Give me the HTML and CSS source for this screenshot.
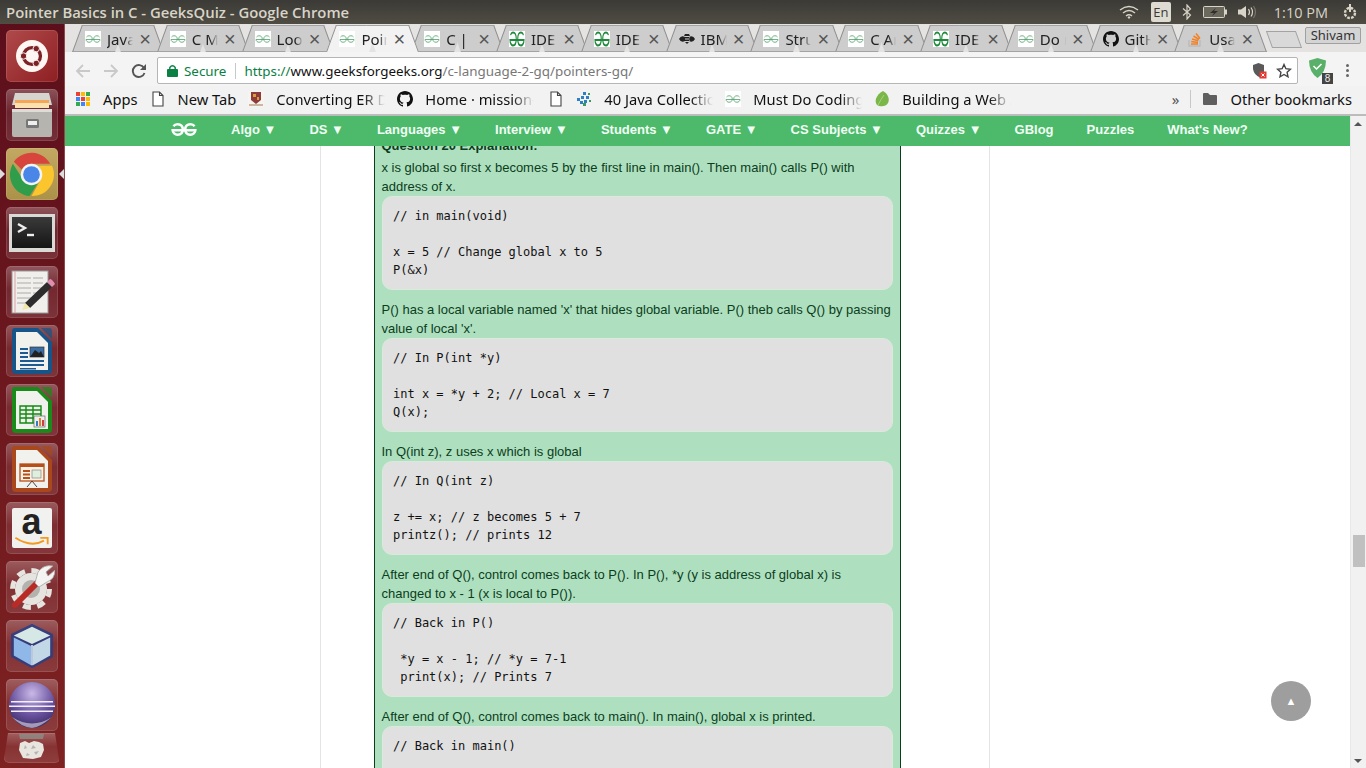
FILE: index.html
```html
<!DOCTYPE html>
<html lang="en">

<head>
  <meta charset="UTF-8">
  <title>Pointer Basics in C - GeeksQuiz - Google Chrome</title>
  <link rel="stylesheet" href="styles.css">
</head>

<body>
  <svg class="defs" width="0" height="0">
    <symbol id="gg" viewBox="0 0 32 16">
      <path fill="none" stroke="currentColor" d="M16 9H30C30 12 27 14.500 24 14.500 20 14.500 17.500 12 17.500 8 17.500 4 20 1.500 24 1.500 26 1.500 28 2.500 29 4M16 9H2C2 12 5 14.500 8 14.500 12 14.500 14.500 12 14.500 8 14.500 4 12 1.500 8 1.500 6 1.500 4 2.500 3 4" />
    </symbol>
    <symbol id="gg-tall" viewBox="0 0 32 16" preserveAspectRatio="none">
      <path fill="none" stroke="currentColor" d="M16 9H30C30 12 27 14.500 24 14.500 20 14.500 17.500 12 17.500 8 17.500 4 20 1.500 24 1.500 26 1.500 28 2.500 29 4M16 9H2C2 12 5 14.500 8 14.500 12 14.500 14.500 12 14.500 8 14.500 4 12 1.500 8 1.500 6 1.500 4 2.500 3 4" />
    </symbol>
    <symbol id="doc" viewBox="0 0 16 16">
      <path fill="#fff" stroke="#444" stroke-width="1.100" d="M3 1H9.500L13 4.500V15H3ZM9.500 1V4.500H13" />
    </symbol>
    <symbol id="octo" viewBox="0 0 16 16">
      <path fill="#111" d="M8 0C3.600 0 0 3.600 0 8c0 3.500 2.300 6.500 5.500 7.600.4.100.5-.2.500-.4v-1.400c-2.200.5-2.700-1-2.700-1-.4-.9-.9-1.200-.9-1.200-.7-.5.100-.5.100-.5.800.1 1.200.8 1.200.8.700 1.200 1.900.9 2.300.7.100-.5.300-.9.500-1.100-1.800-.2-3.600-.9-3.600-4 0-.9.300-1.600.8-2.100-.1-.2-.4-1 .1-2.100 0 0 .7-.2 2.200.8.600-.2 1.300-.3 2-.3s1.400.1 2 .3c1.500-1 2.200-.8 2.200-.8.400 1.100.2 1.900.1 2.100.5.600.8 1.300.8 2.100 0 3.100-1.900 3.700-3.700 3.900.3.300.6.800.6 1.500v2.200c0 .2.100.5.600.4C13.700 14.500 16 11.500 16 8c0-4.400-3.600-8-8-8z" />
    </symbol>
    <symbol id="lo-page" viewBox="0 0 40 46">
      <path fill="currentColor" d="M3 0H26L40 14V42Q40 46 36 46H4Q0 46 0 42V3Q0 0 3 0Z" />
      <path fill="#f1f1ee" d="M4 4H25L36 15V42H4Z" />
      <path fill="currentColor" opacity=".7" d="M29 0H37Q40 0 40 3V11Z" />
    </symbol>
  </svg>

  <div class="titlebar">
    <span class="window-title">Pointer Basics in C - GeeksQuiz - Google Chrome</span>
    <div class="tray">
      <svg class="tray-wifi" width="20" height="14" viewBox="0 0 20 14">
        <path fill="none" stroke="#d8d4c8" stroke-width="1.400" d="M1 5Q10-2 19 5M4 8Q10 3 16 8M7 11Q10 8.500 13 11" />
        <path fill="#d8d4c8" d="M8.500 12.500L10 11l1.500 1.500L10 14Z" />
      </svg>
      <span class="tray-lang">En</span>
      <svg width="10" height="16" viewBox="0 0 10 16">
        <path fill="none" stroke="#d8d4c8" stroke-width="1.200" d="M1 4.500L8.500 11 5 15V1L8.500 5 1 11.500" />
      </svg>
      <svg width="24" height="12" viewBox="0 0 24 12">
        <rect x=".5" y=".5" width="21" height="11" rx="1" fill="#6b685e" stroke="#d8d4c8" />
        <rect x="22" y="3.500" width="2" height="5" fill="#d8d4c8" />
        <path fill="#2f2e2a" d="M13 2L7 7h4l-2 3 6-5h-4z" />
      </svg>
      <svg width="20" height="14" viewBox="0 0 20 14">
        <path fill="#d8d4c8" d="M0 4.500H3L8 1V13L3 9.500H0Z" />
        <path fill="none" stroke="#d8d4c8" stroke-width="1.200" d="M10.500 4Q12.500 7 10.500 10M13 2.500Q16 7 13 11.500" />
        <path fill="none" stroke="#77746a" stroke-width="1.200" d="M15.500 1Q19.500 7 15.500 13" />
      </svg>
      <span class="tray-time">1:10 PM</span>
      <svg width="16" height="16" viewBox="0 0 16 16">
        <circle cx="8" cy="9" r="5" fill="none" stroke="#d8d4c8" stroke-width="2.400" stroke-dasharray="2.700 1.200" />
        <path stroke="#d8d4c8" stroke-width="2" d="M8 0V8" />
      </svg>
    </div>
  </div>

  <div class="desktop">
    <aside class="launcher">
      <div class="tile tile-ubuntu">
        <svg width="32" height="32" viewBox="3 3 34 34">
          <circle cx="20" cy="20" r="17" fill="#fdf6f2" />
          <circle cx="20" cy="20" r="9" fill="none" stroke="#7c2126" stroke-width="3.500" />
          <circle cx="11" cy="20" r="3.400" fill="#7c2126" stroke="#fdf6f2" />
          <circle cx="24.500" cy="12.200" r="3.400" fill="#7c2126" stroke="#fdf6f2" />
          <circle cx="24.500" cy="27.800" r="3.400" fill="#7c2126" stroke="#fdf6f2" />
        </svg>
      </div>
      <div class="tile">
        <svg width="46" height="46" viewBox="0 0 46 46">
          <path fill="#d6d4cf" d="M6 1H40L43 13H3Z" />
          <rect x="6" y="8" width="34" height="8" fill="#f2a65a" />
          <rect x="6" y="11" width="34" height="5" fill="#fbe0b0" />
          <rect x="3" y="17" width="40" height="28" rx="2" fill="#b6b4ae" />
          <rect x="3" y="17" width="40" height="3" fill="#dedcd6" />
          <rect x="17" y="27" width="13" height="9" rx="1.500" fill="#777" />
          <rect x="19" y="29" width="9" height="4" fill="#eee" />
        </svg>
      </div>
      <div class="tile tile-active">
        <svg width="47" height="47" viewBox="0 0 48 48">
          <path fill="#d8453c" d="M6 11A22 22 0 0 1 43 13L24 13Q17 13 14 19Z" />
          <path fill="#fbc52d" d="M45 15A22 22 0 0 1 24 46L33 30Q36 22 31 15Z" />
          <path fill="#2f9d4a" d="M5 13A22 22 0 0 0 22 46L31 32Q23 36 16 30Z" />
          <circle cx="24" cy="24" r="11" fill="#f4f4f4" />
          <circle cx="24" cy="24" r="8.500" fill="#4a86e8" />
        </svg>
      </div>
      <div class="tile">
        <svg width="46" height="38" viewBox="0 0 46 38">
          <defs>
            <linearGradient id="term" x1="0" y1="0" x2="0" y2="1">
              <stop offset="0" stop-color="#3a3a3a" />
              <stop offset="1" stop-color="#151515" />
            </linearGradient>
          </defs>
          <rect width="46" height="38" fill="#d9d9d6" />
          <rect x="3" y="3" width="40" height="31" fill="url(#term)" />
          <path fill="none" stroke="#eee" stroke-width="2.400" d="M9 10L16 14 9 18" />
          <path stroke="#eee" stroke-width="2.400" d="M18 21H25" />
        </svg>
      </div>
      <div class="tile">
        <svg width="46" height="44" viewBox="0 0 46 44">
          <rect x="3" y="1" width="36" height="42" fill="#f0efec" stroke="#999" />
          <path stroke="#aaa" stroke-dasharray="14 2" d="M8 8H34M8 13H34M8 18H34M8 23H28M8 28H22M8 33H18" />
          <path stroke="#d8a0a0" d="M6 1V43" />
          <path fill="#2d2d2d" d="M16 33L38 12 43 17 21 38Z" />
          <path fill="#f3e7a6" d="M16 33L21 38 13 40Z" />
          <path fill="#e08fb0" d="M38 12L41 9Q43 9 46 14L43 17Z" />
        </svg>
      </div>
      <div class="tile">
        <svg class="lo-writer" width="40" height="46" viewBox="0 0 40 46">
          <use href="#lo-page" />
          <path fill="#1b5a92" d="M8 20H16V22H8ZM8 24H16V26H8ZM8 28H16V30H8ZM8 32H32V34H8ZM8 36H32V38H8ZM8 40H24V41.500H8Z" />
          <rect x="18" y="19" width="14" height="10" fill="#3a6ea5" stroke="#333" stroke-width=".7" />
          <path fill="#222" d="M18 29L23 22 27 25 29 23 32 29Z" />
        </svg>
      </div>
      <div class="tile">
        <svg class="lo-calc" width="40" height="46" viewBox="0 0 40 46">
          <use href="#lo-page" />
          <path fill="none" stroke="#128a12" stroke-width="1.400" d="M8 19H29V36H8ZM8 23H29M8 27H29M8 31H29M14 19V36M21 19V36" />
          <rect x="22" y="29" width="11" height="11" fill="#eee" stroke="#666" stroke-width=".7" />
          <path fill="#2d7fc4" d="M24 34H26V39H24Z" />
          <path fill="#e08030" d="M27 31H29V39H27Z" />
          <path fill="#d04040" d="M30 33H32V39H30Z" />
        </svg>
      </div>
      <div class="tile">
        <svg class="lo-impress" width="40" height="46" viewBox="0 0 40 46">
          <use href="#lo-page" />
          <rect x="8" y="18" width="24" height="17" fill="#fdf0e4" stroke="#b6501a" stroke-width="1.300" />
          <path fill="#b6501a" d="M8 18H32V21H8ZM11 24H18V26H11ZM11 27.500H18V29.500H11ZM11 31H18V33H11Z" />
          <rect x="20" y="24" width="9" height="8" fill="#dfeedd" stroke="#777" stroke-width=".6" />
          <path fill="none" stroke="#444" d="M20 35L15 41M20 35L25 41" />
        </svg>
      </div>
      <div class="tile">
        <div class="amazon">
          <span class="amazon-a">a</span>
          <svg class="amazon-smile" width="38" height="12" viewBox="0 0 38 13">
            <path fill="none" stroke="#f49a1f" stroke-width="2" d="M1 2Q18 13 32 5" />
            <path fill="none" stroke="#f49a1f" stroke-width="2" d="M28 2H36V9" />
          </svg>
        </div>
      </div>
      <div class="tile">
        <svg width="46" height="46" viewBox="0 0 46 46">
          <circle cx="22" cy="25" r="16" fill="#e6e4e0" />
          <circle cx="22" cy="25" r="18.500" fill="none" stroke="#e6e4e0" stroke-width="5" stroke-dasharray="8 6.500" />
          <circle cx="22" cy="25" r="9" fill="#b4b2ad" />
          <path stroke="#b92b27" stroke-width="6" stroke-linecap="round" d="M6 41L30 17" />
          <path fill="#f4f4f2" stroke="#a5a5a5" stroke-width=".8" d="M26 19L29 8Q35 0 44 2L37 8 39 12 46 6Q46 15 38 18L30 23Z" />
        </svg>
      </div>
      <div class="tile">
        <svg width="44" height="46" viewBox="0 0 46 48">
          <path fill="#2a3f86" opacity=".85" stroke="#2a3f86" stroke-width="2" stroke-linejoin="round" d="M23 2L44 12V35L23 46 2 35V12Z" />
          <path fill="#d6e8e6" d="M23 4L42 13 23 22 4 13Z" />
          <path fill="#8fb8e8" d="M4 15L22 24V44L4 34Z" />
          <path fill="#c3d8e6" d="M42 15L24 24V44L42 34Z" />
          <path stroke="#f4fbff" stroke-width="1.500" d="M23 23V44" />
        </svg>
      </div>
      <div class="tile">
        <svg width="46" height="46" viewBox="0 0 46 46">
          <defs>
            <radialGradient id="ecl" cx=".5" cy=".25" r=".85">
              <stop offset="0" stop-color="#c9b9e6" />
              <stop offset=".55" stop-color="#6a52a0" />
              <stop offset="1" stop-color="#2c2050" />
            </radialGradient>
          </defs>
          <circle cx="23" cy="23" r="23" fill="url(#ecl)" />
          <path fill="#f2eefa" d="M2 19H44V20.500H2ZM0 23.500H46V25H0ZM2 28.500H44V30H2Z" />
          <path fill="#fff" opacity=".5" d="M3 35Q23 48 43 35 30 46 23 46 12 45 3 35Z" />
        </svg>
      </div>
      <div class="tile tile-trash">
        <svg width="27" height="28" viewBox="0 0 27 28">
          <path fill="#8f8d88" opacity=".8" d="M1 1H26L25 6H2Z" />
          <path fill="#e9e6df" d="M2 10L7 8 11 10 16 8 21 9 25 11 26 17 23 24 15 26 5 25 1 17Z" />
          <path fill="#b5b5b0" d="M7 12L9 15 6 16ZM15 12L18 15 13 16ZM21 18L18 22 16 19ZM9 20L12 22 8 23Z" />
        </svg>
      </div>
    </aside>

    <div class="browser">
      <div class="tabstrip">
        <div class="tab">
          <svg class="favicon fav-gg"><use href="#gg" /></svg>
          <span class="tab-name">Java</span><span class="tab-x">×</span>
        </div>
        <div class="tab">
          <svg class="favicon fav-gg"><use href="#gg" /></svg>
          <span class="tab-name">C Ma</span><span class="tab-x">×</span>
        </div>
        <div class="tab">
          <svg class="favicon fav-gg"><use href="#gg" /></svg>
          <span class="tab-name">Loop</span><span class="tab-x">×</span>
        </div>
        <div class="tab tab-active">
          <svg class="favicon fav-gg"><use href="#gg" /></svg>
          <span class="tab-name">Point</span><span class="tab-x">×</span>
        </div>
        <div class="tab">
          <svg class="favicon fav-gg"><use href="#gg" /></svg>
          <span class="tab-name">C | S</span><span class="tab-x">×</span>
        </div>
        <div class="tab">
          <svg class="favicon fav-ide"><use href="#gg-tall" /></svg>
          <span class="tab-name">IDE</span><span class="tab-x">×</span>
        </div>
        <div class="tab">
          <svg class="favicon fav-ide"><use href="#gg-tall" /></svg>
          <span class="tab-name">IDE</span><span class="tab-x">×</span>
        </div>
        <div class="tab">
          <svg class="favicon" viewBox="0 0 16 16">
            <path fill="#222" d="M0 8Q2 4 6 6V10Q2 12 0 8ZM16 8Q14 4 10 6V10Q14 12 16 8ZM6 3H10L11 5H5ZM5.500 6H10.500V7.500H5.500ZM5.500 8.500H10.500V10H5.500ZM6 11H10L8 13Z" />
          </svg>
          <span class="tab-name">IBM</span><span class="tab-x">×</span>
        </div>
        <div class="tab">
          <svg class="favicon fav-gg"><use href="#gg" /></svg>
          <span class="tab-name">Struc</span><span class="tab-x">×</span>
        </div>
        <div class="tab">
          <svg class="favicon fav-gg"><use href="#gg" /></svg>
          <span class="tab-name">C Ar</span><span class="tab-x">×</span>
        </div>
        <div class="tab">
          <svg class="favicon fav-ide"><use href="#gg-tall" /></svg>
          <span class="tab-name">IDE</span><span class="tab-x">×</span>
        </div>
        <div class="tab">
          <svg class="favicon fav-gg"><use href="#gg" /></svg>
          <span class="tab-name">Do r</span><span class="tab-x">×</span>
        </div>
        <div class="tab">
          <svg class="favicon"><use href="#octo" /></svg>
          <span class="tab-name">GitH</span><span class="tab-x">×</span>
        </div>
        <div class="tab">
          <svg class="favicon" viewBox="0 0 16 16">
            <path fill="none" stroke="#bcbbbb" stroke-width="1.400" d="M2 9V15H13V9" />
            <path fill="none" stroke="#f48024" stroke-width="1.500" d="M4 13H11M4.200 10.500L11 11.500M5 8L11.200 9.800M6.500 5L12 8.500M9 2.500L13 7.500" />
          </svg>
          <span class="tab-name">Usa</span><span class="tab-x">×</span>
        </div>
        <div class="newtab"></div>
        <span class="profile">Shivam</span>
      </div>

      <div class="toolbar">
        <svg class="nav-icon" width="16" height="16" viewBox="0 0 16 16">
          <path fill="none" stroke="#c9c9c9" stroke-width="1.800" d="M15 8H2M8 2L2 8 8 14" />
        </svg>
        <svg class="nav-icon" width="16" height="16" viewBox="0 0 16 16">
          <path fill="none" stroke="#c9c9c9" stroke-width="1.800" d="M1 8H14M8 2L14 8 8 14" />
        </svg>
        <svg class="nav-icon" width="16" height="16" viewBox="0 0 16 16">
          <path fill="none" stroke="#555" stroke-width="1.900" d="M13.500 10A6 6 0 1 1 13 5" />
          <path fill="#555" d="M15 1V7H9Z" />
        </svg>
        <div class="omnibox">
          <svg class="lock" width="11" height="13" viewBox="0 0 11 13">
            <path fill="none" stroke="#0b8043" stroke-width="1.400" d="M2.800 6V3.500Q5.500 0 8.200 3.500V6" />
            <rect y="5" width="11" height="8" rx="1" fill="#0b8043" />
          </svg>
          <span class="secure">Secure</span>
          <span class="url"><span class="url-scheme">https://</span>www.geeksforgeeks.org<span class="url-path">/c-language-2-gq/pointers-gq/</span></span>
          <svg class="omni-shield" width="14" height="16" viewBox="0 0 14 16">
            <path fill="#5a5a5a" d="M5.500 0L11 2V9H7V14.500Q1 12 0 6V2Z" />
            <rect x="6.500" y="8.500" width="7" height="7" fill="#e53935" />
            <path stroke="#fff" d="M8.500 10.500L11.500 13.500M11.500 10.500L8.500 13.500" />
          </svg>
          <svg width="16" height="15" viewBox="0 0 16 15">
            <path fill="none" stroke="#444" stroke-width="1.400" d="M8 1.500L9.900 5.700 14.500 6.200 11.100 9.300 12 13.800 8 11.500 4 13.800 4.900 9.300 1.500 6.200 6.100 5.700Z" />
          </svg>
        </div>
        <div class="adguard">
          <svg width="17" height="20" viewBox="0 0 17 20">
            <path fill="#5ab06a" d="M8.500 0L17 2.500Q17 14 8.500 20 0 14 0 2.500Z" />
            <path fill="none" stroke="#fff" stroke-width="1.500" d="M4.500 8L7.500 11 12.500 6" />
          </svg>
          <span class="badge">8</span>
        </div>
        <div class="menu-dots"><i></i><i></i><i></i></div>
      </div>

      <div class="bookmarks">
        <div class="bm">
          <svg class="bm-icon" viewBox="0 0 16 16">
            <path fill="#ea4335" d="M1 1H5V5H1Z" />
            <path fill="#fbbc05" d="M6 1H10V5H6Z" />
            <path fill="#34a853" d="M11 1H15V5H11Z" />
            <path fill="#4285f4" d="M1 6H5V10H1Z" />
            <path fill="#ea4335" d="M6 6H10V10H6Z" />
            <path fill="#fbbc05" d="M11 6H15V10H11Z" />
            <path fill="#34a853" d="M1 11H5V15H1Z" />
            <path fill="#4285f4" d="M6 11H10V15H6Z" />
            <path fill="#fbbc05" d="M11 11H15V15H11Z" />
          </svg>
          <span>Apps</span>
        </div>
        <div class="bm">
          <svg class="bm-icon"><use href="#doc" /></svg>
          <span>New Tab</span>
        </div>
        <div class="bm">
          <svg class="bm-icon" viewBox="0 0 16 16">
            <rect width="16" height="16" fill="#f7f3ee" />
            <path fill="#8e3b3b" d="M3 1H13V9L8 13 3 9Z" />
            <path fill="#d8a03c" d="M5 3H8V6H5ZM9 6H11V9H9Z" />
            <path fill="#c9b8a0" d="M1 13H15V15H1Z" />
          </svg>
          <span class="bm-fade">Converting ER Diagrams</span>
        </div>
        <div class="bm">
          <svg class="bm-icon"><use href="#octo" /></svg>
          <span class="bm-fade">Home · mission-peace</span>
        </div>
        <div class="bm bm-doc">
          <svg class="bm-icon"><use href="#doc" /></svg>
        </div>
        <div class="bm">
          <svg class="bm-icon" viewBox="0 0 16 16">
            <path fill="#2f7fc4" d="M7 1H10V4H7ZM10 5H13V8H10ZM5 5H8V8H5ZM1 7H4V10H1ZM8 9H11V12H8ZM4 10H7V13H4Z" />
            <path fill="#3a9a5a" d="M12 2H14V4H12ZM7 12H10V15H7ZM13 9H15V11H13Z" />
          </svg>
          <span class="bm-fade">40 Java Collection Interview</span>
        </div>
        <div class="bm">
          <svg class="bm-icon fav-gg"><use href="#gg" /></svg>
          <span class="bm-fade">Must Do Coding Questions</span>
        </div>
        <div class="bm">
          <svg class="bm-icon" viewBox="0 0 16 16">
            <path fill="#7ab648" d="M9 0C14 3 16 8 14 12 12 16 6 16 3 14 0 10 2 4 9 0Z" />
            <path fill="none" stroke="#a6d47c" d="M4 14Q7 8 10 4" />
          </svg>
          <span class="bm-fade">Building a Web Application</span>
        </div>
        <div class="bm-right">
          <span class="bm-more">»</span>
          <span class="bm-sep"></span>
          <div class="bm">
            <svg class="bm-icon" viewBox="0 0 16 16">
              <path fill="#5f5f5f" d="M1 3Q1 2 2 2H6L8 4H14Q15 4 15 5V13Q15 14 14 14H2Q1 14 1 13Z" />
            </svg>
            <span>Other bookmarks</span>
          </div>
        </div>
      </div>

      <div class="viewport">
        <div class="page">
          <nav class="site-nav">
            <svg class="site-logo"><use href="#gg" /></svg>
            <a>Algo ▼</a>
            <a>DS ▼</a>
            <a>Languages ▼</a>
            <a>Interview ▼</a>
            <a>Students ▼</a>
            <a>GATE ▼</a>
            <a>CS Subjects ▼</a>
            <a>Quizzes ▼</a>
            <a>GBlog</a>
            <a>Puzzles</a>
            <a>What's New?</a>
          </nav>
          <div class="content-col">
            <div class="answer">
              <p class="answer-head">Question 20 Explanation:</p>
              <p>x is global so first x becomes 5 by the first line in main(). Then main() calls P() with address of x.</p>
              <pre>// in main(void)

x = 5 // Change global x to 5
P(&amp;x)</pre>
              <p>P() has a local variable named 'x' that hides global variable. P() theb calls Q() by passing value of local 'x'.</p>
              <pre>// In P(int *y)

int x = *y + 2; // Local x = 7
Q(x);</pre>
              <p>In Q(int z), z uses x which is global</p>
              <pre>// In Q(int z)

z += x; // z becomes 5 + 7
printz(); // prints 12</pre>
              <p>After end of Q(), control comes back to P(). In P(), *y (y is address of global x) is changed to x - 1 (x is local to P()).</p>
              <pre>// Back in P()

 *y = x - 1; // *y = 7-1
 print(x); // Prints 7</pre>
              <p>After end of Q(), control comes back to main(). In main(), global x is printed.</p>
              <pre>// Back in main()

print(x); // Prints 6</pre>
            </div>
          </div>
          <div class="to-top">▲</div>
        </div>
        <div class="scrollbar">
          <span class="arrow-up"></span>
          <span class="thumb"></span>
          <span class="arrow-down"></span>
        </div>
      </div>
    </div>
  </div>
</body>

</html>
```

FILE: styles.css
```css
* {
  box-sizing: border-box;
}

html,
body {
  height: 100%;
}

body {
  margin: 0;
  height: 768px;
  overflow: hidden;
  display: flex;
  flex-direction: column;
  font-family: "Liberation Sans", Arial, sans-serif;
}

.defs {
  position: absolute;
}

/* ubuntu top panel */
.titlebar {
  height: 24px;
  flex: none;
  display: flex;
  align-items: center;
  padding: 0 8px 0 6px;
  background: linear-gradient(#3b3a36, #4f4c43);
  color: #d8d4c8;
}

.window-title {
  font: 600 14.85px "Open Sans", sans-serif;
}

.tray {
  margin-left: auto;
  display: flex;
  align-items: center;
  gap: 11px;
}

.tray-lang {
  width: 20px;
  height: 20px;
  border-radius: 2px;
  background: #dedbd2;
  color: #3b3a36;
  font: 13px/20px "Open Sans", sans-serif;
  text-align: center;
}

.tray-wifi {
  margin-right: 1px;
}

.tray-time {
  font: 14.5px "Open Sans", sans-serif;
  margin: 0 3px 0 5px;
}

.desktop {
  flex: 1;
  display: flex;
  min-height: 0;
}

/* launcher */
.launcher {
  width: 65px;
  flex: none;
  overflow: hidden;
  display: flex;
  flex-direction: column;
  align-items: center;
  gap: 7px;
  padding: 6px 1px 0 0;
  background: linear-gradient(#5c0f1b, #7e2222);
  border-right: 1px solid #8e4a4a;
}

.tile {
  width: 52px;
  height: 52px;
  flex: none;
  position: relative;
  display: flex;
  align-items: center;
  justify-content: center;
  border-radius: 5px;
  background: linear-gradient(rgba(255, 255, 255, .28), rgba(255, 255, 255, .08) 45%, rgba(255, 255, 255, .12));
  box-shadow: inset 0 0 0 1px rgba(255, 255, 255, .12);
}

.tile-ubuntu {
  background: linear-gradient(135deg, #b04a4a, #8e1f22);
}

.tile-active {
  background: linear-gradient(#c2a862, #ac9149);
}

.tile-active::before,
.tile-active::after {
  content: "";
  position: absolute;
  top: 21px;
  border: 5px solid transparent;
}

.tile-active::before {
  left: -6px;
  border-left-color: #ddd;
}

.tile-active::after {
  right: -6px;
  border-right-color: #ddd;
}

.tile-trash {
  width: 56px;
  height: 30px;
  margin-top: -5px;
  align-items: flex-start;
  clip-path: polygon(8% 0, 92% 0, 100% 100%, 0 100%);
}

.lo-writer {
  color: #175488;
}

.lo-calc {
  color: #1a8a1a;
}

.lo-impress {
  color: #a8481c;
}

.amazon {
  width: 40px;
  height: 40px;
  border-radius: 2px;
  background: #f1f1ef;
  display: flex;
  flex-direction: column;
  align-items: center;
  overflow: hidden;
}

.amazon-a {
  height: 28px;
  font: bold 36px/28px "Liberation Sans", sans-serif;
  color: #222;
}

.amazon-smile {
  flex: none;
}

/* chrome */
.browser {
  flex: 1;
  min-width: 0;
  display: flex;
  flex-direction: column;
}

.tabstrip {
  height: 28px;
  flex: none;
  position: relative;
  display: flex;
  padding-left: 10px;
  background: #e4e3e1;
  overflow: hidden;
}

.tab {
  width: 84.8px;
  height: 28px;
  flex: none;
  position: relative;
  z-index: 0;
  display: flex;
  align-items: center;
  padding: 1px 0 0 10px;
  color: #222;
  font: 15px "Noto Sans", sans-serif;
}

.tab::before,
.tab::after {
  content: "";
  position: absolute;
  top: 1px;
  bottom: 0;
  width: 50%;
  z-index: -1;
  background: #cdcdcd;
  border-top: 1px solid #a3a3a3;
  border-bottom: 1px solid #a3a3a3;
}

.tab::before {
  left: 2px;
  transform: skewX(-20deg);
  border-left: 1px solid #8e8e8e;
}

.tab::after {
  right: 0;
  transform: skewX(20deg);
  border-right: 1px solid #8e8e8e;
}

.tab-active {
  z-index: 1;
}

.tab-active::before,
.tab-active::after {
  background: #f2f2f2;
  border-bottom: 0;
}

.favicon {
  width: 16px;
  height: 16px;
  flex: none;
}

.fav-gg {
  background: #fff;
  color: #4f9f68;
  padding: 2px 0;
  stroke-width: 1.600px;
}

.fav-ide {
  background: #fff;
  color: #1e8a3c;
  stroke-width: 2.200px;
}

.tab-name {
  width: 26px;
  margin-left: 6px;
  overflow: hidden;
  white-space: nowrap;
  -webkit-mask-image: linear-gradient(90deg, #000 70%, transparent);
  mask-image: linear-gradient(90deg, #000 70%, transparent);
}

.tab-x {
  width: 14px;
  margin-left: 5px;
  color: #555;
  font: 20px/1 "Liberation Sans", sans-serif;
  text-align: center;
}

.newtab {
  width: 30px;
  height: 17px;
  margin: 7px 0 0 7px;
  background: #d9d9d9;
  border: 1px solid #a3a3a3;
  transform: skewX(20deg);
}

.profile {
  position: absolute;
  right: 5px;
  top: 3px;
  width: 56px;
  height: 17px;
  border: 1px solid #a0a0a0;
  border-radius: 2px;
  background: #d4d4d4;
  color: #333;
  font: 13px/15px "Noto Sans", sans-serif;
  text-align: center;
}

.toolbar {
  height: 34px;
  flex: none;
  display: flex;
  align-items: center;
  padding: 3px 9px 0 10px;
  background: #f4f4f4;
}

.nav-icon {
  margin-right: 12px;
  flex: none;
}

.nav-icon:nth-child(3) {
  margin-right: 10px;
}

.omnibox {
  width: 1141px;
  height: 27px;
  flex: none;
  display: flex;
  align-items: center;
  padding: 0 5px 0 9px;
  background: #fff;
  border: 1px solid #b5b5b5;
  border-radius: 2px;
  font: 13.4px "Noto Sans", sans-serif;
}

.secure {
  margin-left: 6px;
  padding-right: 9px;
  margin-right: 8px;
  color: #0b8043;
  border-right: 1px solid #c8c8c8;
  line-height: 16px;
}

.url {
  color: #111;
}

.url-scheme {
  color: #0b8043;
}

.url-path {
  color: #777;
}

.omni-shield {
  margin-left: auto;
  margin-right: 9px;
}

.adguard {
  position: relative;
  margin-left: 11px;
  width: 24px;
  height: 26px;
}

.badge {
  position: absolute;
  right: 0;
  bottom: 0;
  width: 11px;
  height: 11px;
  background: #444;
  color: #eee;
  font: 10px/11px "Liberation Sans", sans-serif;
  text-align: center;
}

.menu-dots {
  margin-left: 13px;
  display: flex;
  flex-direction: column;
  gap: 2px;
}

.menu-dots i {
  width: 3px;
  height: 3px;
  background: #666;
  border-radius: 50%;
}

.bookmarks {
  height: 30px;
  flex: none;
  display: flex;
  align-items: center;
  gap: 12px;
  padding: 0 14px 2px 10px;
  background: #f2f2f2;
  border-bottom: 2px solid #bcbcbc;
  color: #111;
  font: 14.7px "Noto Sans", sans-serif;
}

.bm {
  display: flex;
  align-items: center;
  gap: 12px;
}

.bm-icon {
  width: 16px;
  height: 16px;
  flex: none;
}

.bm-fade {
  width: 109px;
  overflow: hidden;
  white-space: nowrap;
  -webkit-mask-image: linear-gradient(90deg, #000 80%, transparent);
  mask-image: linear-gradient(90deg, #000 80%, transparent);
}

.bm-doc {
  margin: 0 0 0 2px;
}

.bm-right {
  margin-left: auto;
  display: flex;
  align-items: center;
  gap: 11px;
}

.bm-more {
  color: #555;
  font-size: 15px;
}

.bm-sep {
  width: 1px;
  height: 18px;
  background: #c8c8c8;
}

/* the page */
.viewport {
  flex: 1;
  min-height: 0;
  display: flex;
}

.page {
  flex: 1;
  min-width: 0;
  position: relative;
  overflow: hidden;
  background: #fff;
}

.site-nav {
  position: absolute;
  z-index: 2;
  top: 0;
  left: 0;
  right: 0;
  height: 30px;
  display: flex;
  align-items: center;
  gap: 33px;
  padding: 0 0 4px 106px;
  background: #4cb96b;
  color: #f0fff4;
  font-size: 13px;
  font-weight: bold;
}

.site-logo {
  width: 26px;
  height: 13px;
  color: #fff;
  margin-right: 1px;
  stroke-width: 3px;
}

.content-col {
  width: 670px;
  height: 100%;
  margin-left: 255px;
  padding: 20px 0 0 53px;
  border-left: 1px solid #e4e4e4;
  border-right: 1px solid #e4e4e4;
}

.answer {
  width: 527px;
  min-height: 100%;
  padding: 0 6px 0 6.500px;
  background: #aee0bf;
  border-left: 1px solid #0c3d1c;
  border-right: 1px solid #0c3d1c;
  color: #0c3d1c;
  font-size: 13px;
  line-height: 19px;
}

.answer p {
  margin: 0;
  width: 512px;
}

.answer .answer-head {
  font-weight: bold;
  margin-bottom: 3px;
}

.answer pre {
  margin: 0 0 10px .5px;
  width: 511px;
  padding: 10px;
  background: #e0e0e0;
  border: 1px solid #d8ead9;
  border-radius: 10px;
  color: #111;
  font: 12px/18px "DejaVu Sans Mono", monospace;
}

.to-top {
  position: absolute;
  left: 1206px;
  top: 565px;
  width: 40px;
  height: 40px;
  border-radius: 50%;
  background: #9e9e9e;
  color: #fff;
  font-size: 11px;
  line-height: 40px;
  text-align: center;
}

.scrollbar {
  width: 16px;
  flex: none;
  position: relative;
  background: #f1f1f1;
  border-left: 1px solid #e8e8e8;
}

.thumb {
  position: absolute;
  left: 2px;
  right: 1px;
  top: 419px;
  height: 32px;
  background: #c0c0c0;
}

.arrow-up,
.arrow-down {
  position: absolute;
  left: 3px;
  border: 4px solid transparent;
}

.arrow-up {
  top: 2px;
  border-bottom-color: #555;
}

.arrow-down {
  bottom: 1px;
  border-top-color: #555;
}
```
